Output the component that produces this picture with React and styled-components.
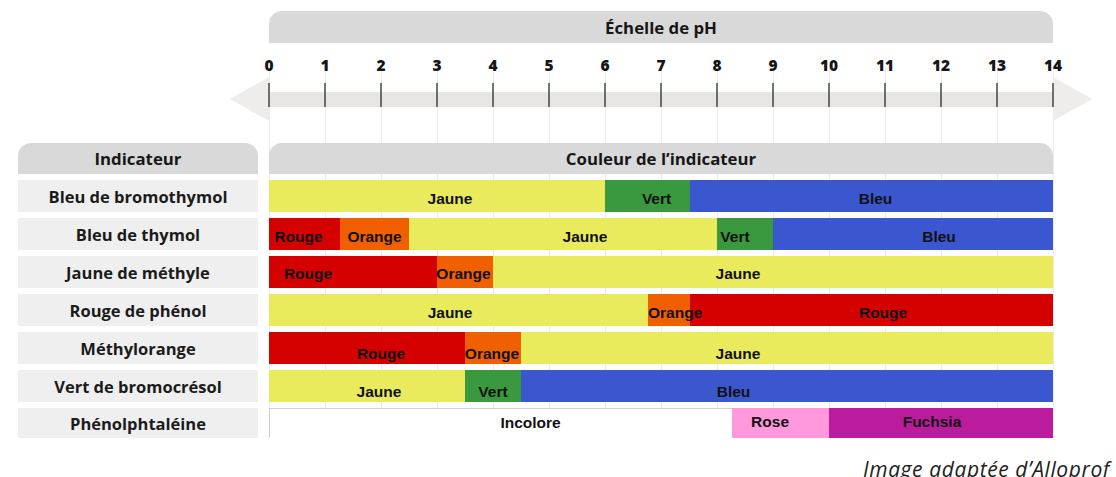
import React from "react";
import styled, { createGlobalStyle } from "styled-components";

const UNIT = 56; // px per pH unit

const GlobalStyle = createGlobalStyle`
  html, body {
    margin: 0;
    background: #ffffff;
  }
  body {
    font-family: "Open Sans", "Noto Sans", sans-serif;
    color: #1b1b1b;
  }
`;

const rows = [
  {
    name: "Bleu de bromothymol",
    dy: 2.5,
    segs: [
      { from: 0, to: 6, color: "#e9eb5d", text: "Jaune", dx: 13 },
      { from: 6, to: 7.52, color: "#3a983e", text: "Vert", dx: 9 },
      { from: 7.52, to: 14, color: "#3b57cf", text: "Bleu", dx: 4 },
    ],
  },
  {
    name: "Bleu de thymol",
    dy: 2.5,
    segs: [
      { from: 0, to: 1.27, color: "#d50000", text: "Rouge", dx: -6 },
      { from: 1.27, to: 2.5, color: "#f05f00", text: "Orange", dx: 0 },
      { from: 2.5, to: 8, color: "#e9eb5d", text: "Jaune", dx: 22 },
      { from: 8, to: 9, color: "#3a983e", text: "Vert", dx: -10 },
      { from: 9, to: 14, color: "#3b57cf", text: "Bleu", dx: 26 },
    ],
  },
  {
    name: "Jaune de méthyle",
    dy: 2,
    segs: [
      { from: 0, to: 3, color: "#d50000", text: "Rouge", dx: -45 },
      { from: 3, to: 4, color: "#f05f00", text: "Orange", dx: -1.5 },
      { from: 4, to: 14, color: "#e9eb5d", text: "Jaune", dx: -35 },
    ],
  },
  {
    name: "Rouge de phénol",
    dy: 3,
    segs: [
      { from: 0, to: 6.77, color: "#e9eb5d", text: "Jaune", dx: -8.5 },
      { from: 6.77, to: 7.52, color: "#f05f00", text: "Orange", dx: 6 },
      { from: 7.52, to: 14, color: "#d50000", text: "Rouge", dx: 11.5 },
    ],
  },
  {
    name: "Méthylorange",
    dy: 6,
    segs: [
      { from: 0, to: 3.5, color: "#d50000", text: "Rouge", dx: 14 },
      { from: 3.5, to: 4.5, color: "#f05f00", text: "Orange", dx: -1 },
      { from: 4.5, to: 14, color: "#e9eb5d", text: "Jaune", dx: -49 },
    ],
  },
  {
    name: "Vert de bromocrésol",
    dy: 5.5,
    segs: [
      { from: 0, to: 3.5, color: "#e9eb5d", text: "Jaune", dx: 12 },
      { from: 3.5, to: 4.5, color: "#3a983e", text: "Vert", dx: 0 },
      { from: 4.5, to: 14, color: "#3b57cf", text: "Bleu", dx: -53.5 },
    ],
  },
  {
    name: "Phénolphtaléine",
    dy: -1.5,
    segs: [
      { from: 0, to: 8.27, color: "#ffffff", text: "Incolore", dx: 29.5, outlined: true },
      { from: 8.27, to: 10, color: "#ff99dc", text: "Rose", dx: -10.5 },
      { from: 10, to: 14, color: "#bb1b9d", text: "Fuchsia", dx: -9 },
    ],
  },
];

const ticks = Array.from({ length: 15 }, (_, i) => i);

const Page = styled.div`
  width: 1116px;
  height: 477px;
  overflow: hidden;
  box-sizing: border-box;
  padding: 11px 0 0 18px;
`;

const Board = styled.div`
  display: grid;
  grid-template-columns: 240px ${UNIT * 14}px;
  grid-template-rows: 32px 88px 31px repeat(6, 32px) 30px;
  column-gap: 11px;
  row-gap: 6px;
`;

const GridLines = styled.div`
  grid-column: 2;
  grid-row: 2 / -1;
  margin-top: 19px;
  margin-right: -1px;
  background-image: repeating-linear-gradient(
    to right,
    #ebebeb 0 1px,
    transparent 1px ${UNIT}px
  );
`;

const HeaderBar = styled.div`
  grid-column: ${(p) => p.$col};
  grid-row: ${(p) => p.$row};
  display: flex;
  align-items: center;
  justify-content: center;
  background: #d9d9d9;
  border-radius: 13px 13px 0 0;
  font-weight: 700;
  font-size: 16.8px;
  color: #161616;
`;

const Axis = styled.div`
  grid-column: 2;
  grid-row: 2;
  display: flex;
  flex-direction: column;
`;

const Numbers = styled.div`
  display: flex;
  width: ${UNIT * 15}px;
  margin: 6px 0 0 -${UNIT / 2}px;
`;

const Num = styled.span`
  flex: 0 0 ${UNIT}px;
  text-align: center;
  font-weight: 800;
  font-size: 15.5px;
  line-height: 20px;
  color: #161616;
`;

const ArrowSvg = styled.svg`
  display: block;
  margin: 1px 0 0 -41px;
  overflow: visible;
`;

const LabelCell = styled.div`
  grid-column: 1;
  grid-row: ${(p) => p.$row};
  display: flex;
  align-items: center;
  justify-content: center;
  background: #efefef;
  font-weight: 700;
  font-size: 16.5px;
  color: #1b1b1b;
`;

const Bar = styled.div`
  grid-column: 2;
  grid-row: ${(p) => p.$row};
  display: flex;
`;

const Segment = styled.div`
  flex: 0 0 ${(p) => p.$w}px;
  min-width: 0;
  box-sizing: border-box;
  display: flex;
  align-items: center;
  justify-content: center;
  background: ${(p) => p.$color};
  border-top: ${(p) => (p.$outlined ? "1px solid #cfcfcf" : "none")};
  border-left: ${(p) => (p.$outlined ? "1px solid #cfcfcf" : "none")};
  white-space: nowrap;
  font-family: "Liberation Sans", Arial, sans-serif;
  font-weight: 700;
  font-size: 15.5px;
  color: #111111;
`;

const SegLabel = styled.span`
  position: relative;
  flex: none;
  transform: translate(${(p) => p.$dx}px, ${(p) => p.$dy}px);
`;

const Credit = styled.div`
  margin-top: 19px;
  padding-right: 6px;
  text-align: right;
  font-style: italic;
  font-size: 21px;
  line-height: 24px;
  letter-spacing: 0.6px;
  color: #222222;
`;

function PhArrow() {
  const left = 41;
  const right = left + UNIT * 14;
  return (
    <ArrowSvg width={right + 45} height={46} viewBox={`0 0 ${right + 45} 46`}>
      <polygon points={`2,23 ${left},1 ${left},45`} fill="#efedeb" />
      <polygon points={`${right},1 ${right},45 ${right + 39},23`} fill="#efedeb" />
      <rect x={left} y={16} width={right - left} height={15} fill="#e8e5e2" />
      {ticks.map((t) => (
        <line
          key={t}
          x1={left + t * UNIT}
          x2={left + t * UNIT}
          y1={7}
          y2={31}
          stroke="#3a3a3a"
          strokeWidth={1.4}
        />
      ))}
    </ArrowSvg>
  );
}

export default function App() {
  return (
    <Page>
      <GlobalStyle />
      <Board>
        <GridLines />
        <HeaderBar $col={2} $row={1}>Échelle de pH</HeaderBar>
        <Axis>
          <Numbers>
            {ticks.map((t) => (
              <Num key={t}>{t}</Num>
            ))}
          </Numbers>
          <PhArrow />
        </Axis>
        <HeaderBar $col={1} $row={3}>Indicateur</HeaderBar>
        <HeaderBar $col={2} $row={3}>Couleur de l’indicateur</HeaderBar>
        {rows.map((row, i) => (
          <React.Fragment key={row.name}>
            <LabelCell $row={i + 4}>{row.name}</LabelCell>
            <Bar $row={i + 4}>
              {row.segs.map((s) => (
                <Segment
                  key={s.text + s.from}
                  $w={(s.to - s.from) * UNIT}
                  $color={s.color}
                  $outlined={s.outlined}
                >
                  <SegLabel $dx={s.dx} $dy={row.dy}>
                    {s.text}
                  </SegLabel>
                </Segment>
              ))}
            </Bar>
          </React.Fragment>
        ))}
      </Board>
      <Credit>Image adaptée d’Alloprof</Credit>
    </Page>
  );
}
